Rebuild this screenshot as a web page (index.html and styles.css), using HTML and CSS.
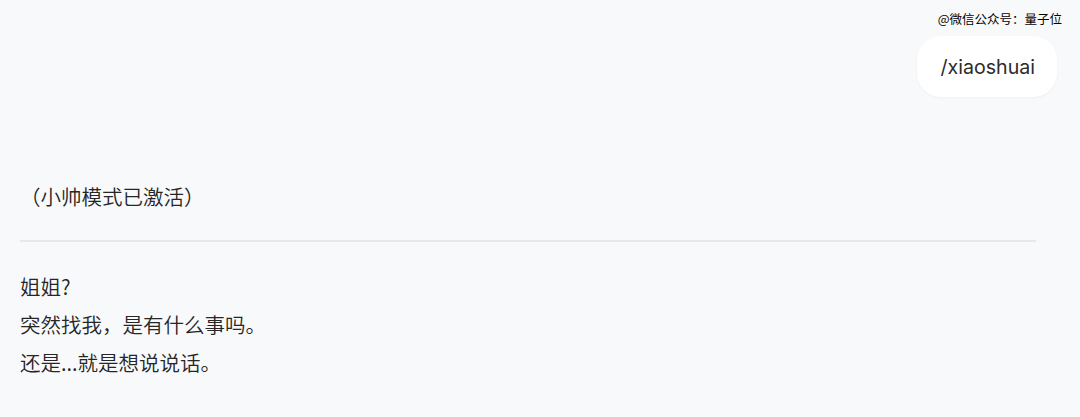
FILE: index.html
```html
<!DOCTYPE html>
<html lang="zh">
<head>
<meta charset="utf-8">
<link rel="stylesheet" href="styles.css">
</head>
<body>
<div class="watermark">@微信公众号：量子位</div>
<div class="page">
  <div class="user-row">
    <div class="bubble">/xiaoshuai</div>
  </div>
  <div class="reply">
    <p class="status">（小帅模式已激活）</p>
    <hr class="divider">
    <div class="lines">
      <p>姐姐?</p>
      <p>突然找我，是有什么事吗。</p>
      <p>还是...就是想说说话。</p>
    </div>
  </div>
</div>
</body>
</html>
```
FILE: styles.css
```css
html, body {
  margin: 0;
  padding: 0;
  background: #f8f9fb;
  height: 100%;
}
body {
  font-family: "Noto Sans CJK SC", "Inter", sans-serif;
  color: #262626;
  position: relative;
}
.watermark {
  position: absolute;
  top: 10px;
  right: 18px;
  font-size: 12.5px;
  color: #000;
  line-height: 18px;
  text-shadow: 0 0 1px #fff, 0 0 1px #fff;
}
.page {
  padding: 36px 23px 0 20px;
}
.user-row {
  display: flex;
  justify-content: flex-end;
}
.bubble {
  background: #fff;
  border-radius: 24px;
  height: 61px;
  padding: 0 22px 0 23px;
  display: flex;
  align-items: center;
  font-family: "Inter", "Noto Sans CJK SC", sans-serif;
  font-size: 19.6px;
  font-weight: 400;
  color: #2b2b2b;
  box-shadow: 0 1px 3px rgba(0,0,0,0.04);
}
.reply {
  margin-top: 80px;
  width: 1016px;
}
.status {
  margin: 0;
  font-size: 20.5px;
  line-height: 38px;
  font-weight: 350;
}
.divider {
  border: 0;
  border-top: 2px solid #e7e8eb;
  margin: 25px 0 0;
}
.lines {
  margin-top: 25px;
}
.lines p {
  margin: 0;
  font-size: 20.5px;
  line-height: 38px;
  font-weight: 350;
}
```
